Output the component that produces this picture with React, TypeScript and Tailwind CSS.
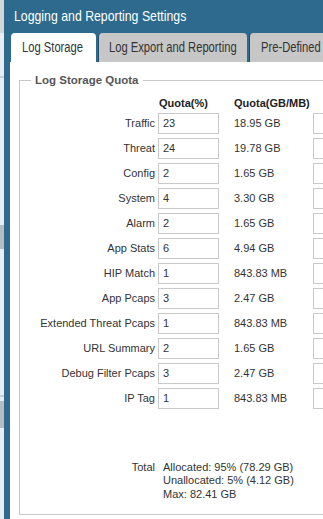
import React from "react";

const rows: [string, string, string][] = [
  ["Traffic", "23", "18.95 GB"],
  ["Threat", "24", "19.78 GB"],
  ["Config", "2", "1.65 GB"],
  ["System", "4", "3.30 GB"],
  ["Alarm", "2", "1.65 GB"],
  ["App Stats", "6", "4.94 GB"],
  ["HIP Match", "1", "843.83 MB"],
  ["App Pcaps", "3", "2.47 GB"],
  ["Extended Threat Pcaps", "1", "843.83 MB"],
  ["URL Summary", "2", "1.65 GB"],
  ["Debug Filter Pcaps", "3", "2.47 GB"],
  ["IP Tag", "1", "843.83 MB"],
];

const narrow = { fontFamily: '"Liberation Sans", Arial, sans-serif' };

export default function App() {
  return (
    <div className="w-[323px] h-[519px] overflow-hidden flex bg-[#e8eef1]">
      <div className="w-[4px] shrink-0 flex flex-col">
        <div className="h-[33px] bg-[#d3d7d9]" />
        <div className="h-[43px]" />
        <div className="h-[2px] bg-[#c9d0d4]" />
        <div className="h-[147px]" />
        <div className="h-[24px] bg-[#b9bcbe]" />
        <div className="h-[146px]" />
        <div className="h-[2px] bg-[#c9d0d4]" />
        <div className="h-[4px]" />
        <div className="h-[27px] bg-[#b9bcbe]" />
      </div>
      <div className="w-[420px] shrink-0 flex flex-col bg-[#2d6a8d] pl-[6px]">
        <div className="h-[33px] flex items-center pl-[4px] text-white text-[15px] whitespace-nowrap" style={narrow}>
          <span className="inline-block origin-left scale-x-[0.82]">Logging and Reporting Settings</span>
        </div>
        <div className="h-[29px] flex items-end gap-[2px] pl-[1px] text-[14px] text-[#333] whitespace-nowrap" style={narrow}>
          <div className="h-[29px] w-[85px] shrink-0 bg-white rounded-t-[4px] flex items-center pl-[11px]">
            <span className="inline-block origin-left scale-x-[0.8]">Log Storage</span>
          </div>
          <div className="h-[29px] w-[149px] shrink-0 bg-[#c7c7c7] rounded-t-[4px] flex items-center pl-[10px] border-l border-[#1f4f6b]">
            <span className="inline-block origin-left scale-x-[0.8]">Log Export and Reporting</span>
          </div>
          <div className="h-[29px] w-[130px] shrink-0 bg-[#c7c7c7] rounded-t-[4px] flex items-center pl-[11px] border-l border-[#1f4f6b]">
            <span className="inline-block origin-left scale-x-[0.8]">Pre-Defined Reports</span>
          </div>
        </div>
        <div className="flex-1 bg-white pl-[9px] pt-[10px] pb-[4px] flex">
          <fieldset
            className="border border-[#c8c8c8] w-[400px] h-[443px] px-0 text-[11px] text-[#333]"
            style={{ fontFamily: '"Liberation Sans", Arial, sans-serif' }}
          >
            <legend className="ml-[11px] px-[4px] font-bold text-[#555] text-[11.5px]">Log Storage Quota</legend>
            <div className="grid grid-cols-[135px_61px_88px_60px] gap-x-[3px] pt-[6px]">
              <div />
              <div className="font-bold text-[#222] pl-[1px]">Quota(%)</div>
              <div className="font-bold text-[#222] pl-[12px]">Quota(GB/MB)</div>
              <div />
            </div>
            <div className="flex flex-col gap-[4px] mt-[1px]">
              {rows.map(([label, pct, size]) => (
                <div key={label} className="grid grid-cols-[135px_61px_88px_60px] gap-x-[3px] items-center h-[21px]">
                  <div className="text-right">{label}</div>
                  <div className="h-[21px] border border-[#c9c9c9] pl-[4px] flex items-center">{pct}</div>
                  <div className="pl-[12px]">{size}</div>
                  <div className="h-[21px] border border-[#c9c9c9]" />
                </div>
              ))}
            </div>
            <div className="grid grid-cols-[135px_200px] gap-x-[8px] mt-[52px] leading-[13.5px]">
              <div className="text-right">Total</div>
              <div className="flex flex-col">
                <span>Allocated: 95% (78.29 GB)</span>
                <span>Unallocated: 5% (4.12 GB)</span>
                <span>Max: 82.41 GB</span>
              </div>
            </div>
          </fieldset>
        </div>
      </div>
    </div>
  );
}
